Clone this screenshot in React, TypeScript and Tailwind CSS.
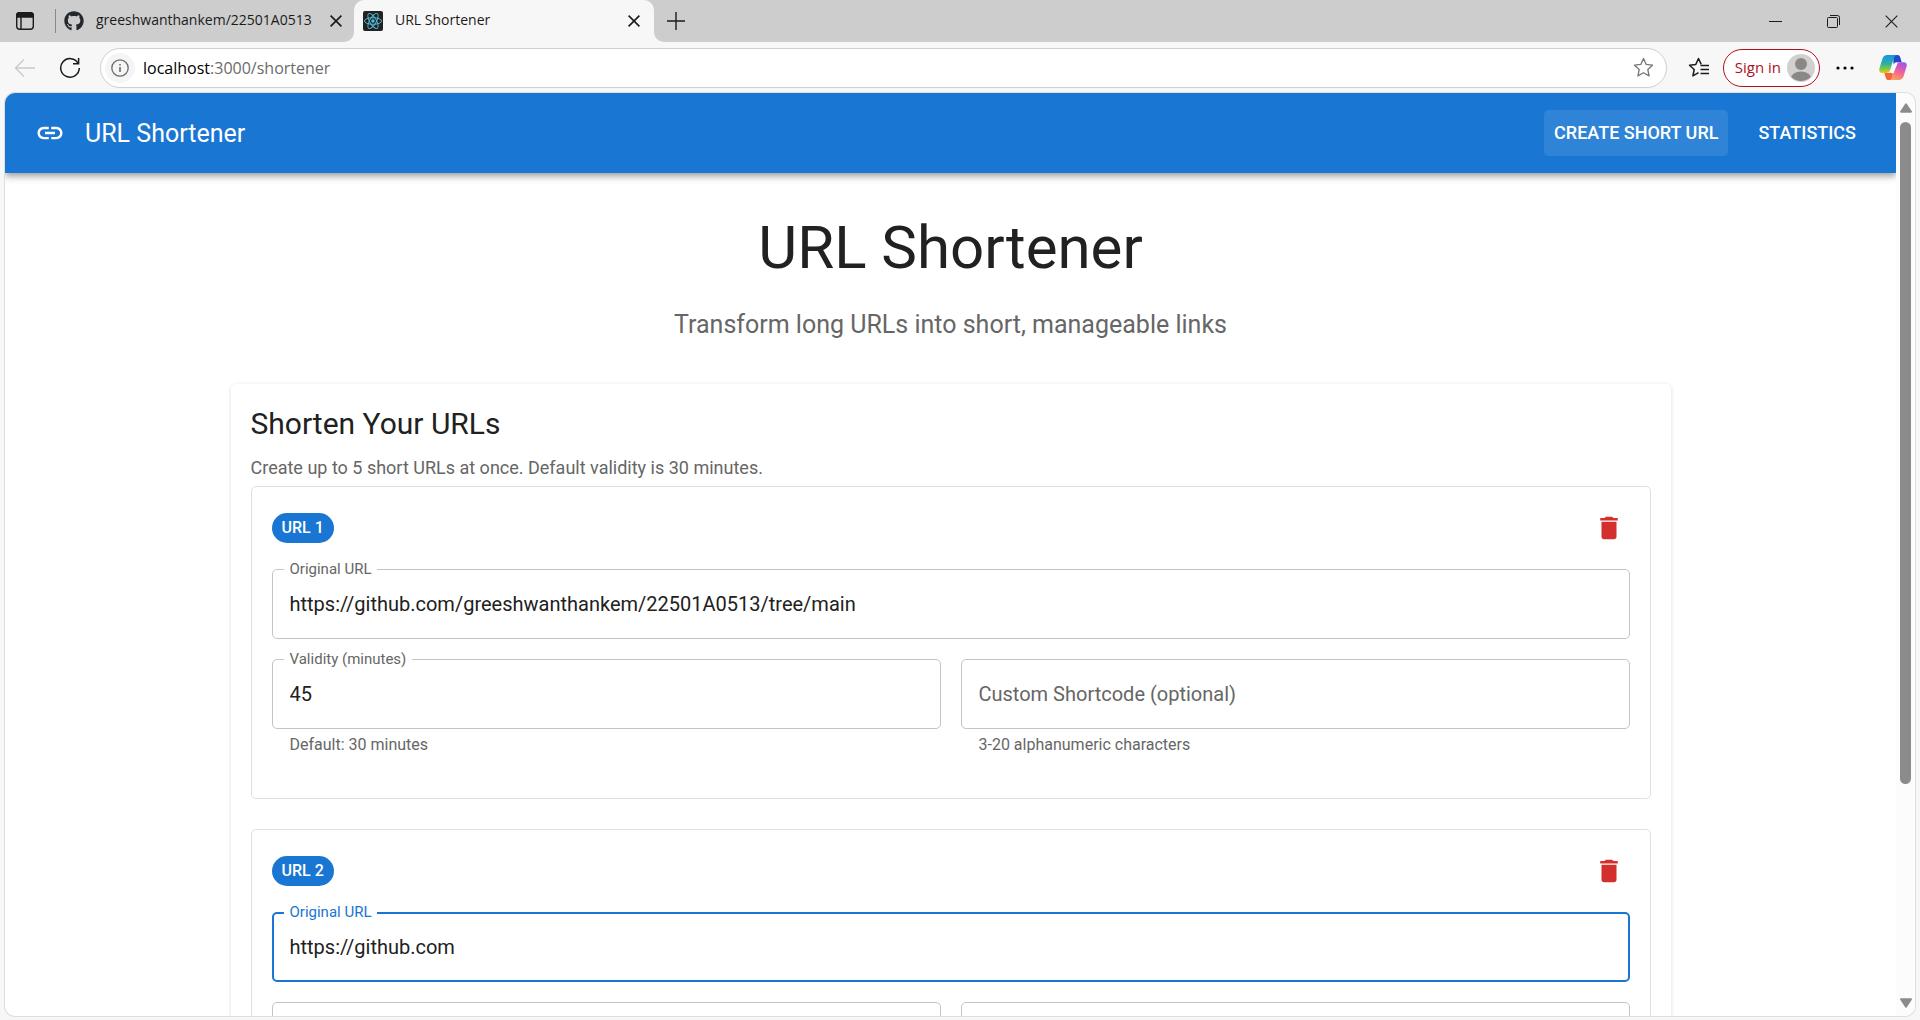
import React, { useState } from "react";
import { MdDelete, MdLink } from "react-icons/md";
import { FaGithub } from "react-icons/fa";

type UrlEntry = { original: string; validity: string; shortcode: string };

function TabActionsIcon() {
  return (
    <svg width="20" height="20" viewBox="0 0 20 20" fill="none" stroke="#1b1b1b" strokeWidth="1.4">
      <rect x="1.7" y="1.7" width="16.6" height="16.6" rx="3" />
      <path d="M2 2.8C2.5 1.6 3.6 1.7 5 1.7h10c1.400 0 2.500 0 3 1.100V6H2z" fill="#1b1b1b" />
      <path d="M6 6v12" />
    </svg>
  );
}

function ReactLogo() {
  return (
    <svg width="20" height="20" viewBox="0 0 20 20" fill="none" stroke="#53c1de" strokeWidth="0.9">
      <rect width="20" height="20" rx="2" fill="#222" stroke="none" />
      <ellipse cx="10" cy="10" rx="8.600" ry="3.300" />
      <ellipse cx="10" cy="10" rx="8.600" ry="3.300" transform="rotate(60 10 10)" />
      <ellipse cx="10" cy="10" rx="8.600" ry="3.300" transform="rotate(120 10 10)" />
      <circle cx="10" cy="10" r="1.700" fill="#53c1de" stroke="none" />
    </svg>
  );
}

function CrossIcon({ size = 12, width = 1.6 }: { size?: number; width?: number }) {
  return (
    <svg width={size} height={size} viewBox="0 0 12 12" fill="none" stroke="#1b1b1b" strokeWidth={width}>
      <path d="M.6.6l10.800 10.800M11.400.6L.6 11.400" />
    </svg>
  );
}

function BackIcon() {
  return (
    <svg width="22" height="20" viewBox="0 0 22 20" fill="none" stroke="#c9c9c9" strokeWidth="1.3">
      <path d="M21 10H1.500M10 1.500L1.500 10l8.500 8.500" />
    </svg>
  );
}

function ReloadIcon() {
  return (
    <svg width="22" height="22" viewBox="0 0 22 22" fill="none" stroke="#1b1b1b" strokeWidth="1.5">
      <path d="M19.200 6.500A9.300 9.300 0 1 0 20.300 11" />
      <path d="M19.600 1v5.800H14" />
    </svg>
  );
}

const starPath = "M10.500 1.500l2.700 5.900 6.300.8-4.700 4.300 1.300 6.400-5.600-3.200-5.600 3.200 1.300-6.400L1.500 8.200l6.300-.8z";

function StarIcon() {
  return (
    <svg width="21" height="21" viewBox="0 0 21 21" fill="none" stroke="#767676" strokeWidth="1.300" strokeLinejoin="round">
      <path d={starPath} />
    </svg>
  );
}

function FavoritesIcon() {
  return (
    <svg width="22" height="21" viewBox="0 0 22 21" fill="none" stroke="#1b1b1b" strokeWidth="1.500" strokeLinejoin="round">
      <path d="M10.500 15.700l-5.600 3.200 1.300-6.400L1.500 8.200l6.300-.8 2.700-5.900 2.700 5.900" />
      <path d="M12.500 8.500h8.500M12.500 12.500h8.500M12.500 16.500h8.500" />
    </svg>
  );
}

function CopilotIcon() {
  return (
    <svg width="28" height="27" viewBox="0 0 28 27">
      <defs>
        <linearGradient id="cpLeft" x1="0.300" y1="0" x2="0.300" y2="1">
          <stop offset="0" stopColor="#1795e6" />
          <stop offset="0.500" stopColor="#2fb0a0" />
          <stop offset="0.800" stopColor="#8fc83c" />
          <stop offset="1" stopColor="#f2c80a" />
        </linearGradient>
        <linearGradient id="cpRight" x1="0.700" y1="0" x2="0.300" y2="1">
          <stop offset="0" stopColor="#a253e8" />
          <stop offset="0.500" stopColor="#f0619a" />
          <stop offset="1" stopColor="#fba55a" />
        </linearGradient>
      </defs>
      <path d="M14 1h4.500c1.500 0 2.200.8 2.700 2.300l1.500 5H18c-2 0-2.800.8-3.400 2.500z" fill="#2249cf" />
      <path d="M14 26H9.500C8 26 7.300 25.200 6.800 23.700L5.300 19H10c2 0 2.800-.8 3.400-2.500z" fill="#f3653a" />
      <path d="M8.500 1H18c-1.800 0-2.600 1.300-3.200 3.200l-3.600 11.600C10.500 18 9.300 19 7.300 19H3.200C.8 19-.2 17.400.4 14.500L3.500 4.500C4.300 2.200 5.800 1 8.500 1z" fill="url(#cpLeft)" />
      <path d="M19.500 26H10c1.800 0 2.600-1.300 3.200-3.200l3.600-11.600C17.500 9 18.700 8.300 20.700 8.300h4.100c2.400 0 3.400 1.600 2.800 4.200l-3.100 10C23.700 24.800 22.200 26 19.500 26z" fill="url(#cpRight)" />
      <path d="M16.300 9h2.400l-4.200 10h-2.900z" fill="#fff" />
    </svg>
  );
}

function TabStrip() {
  return (
    <div className="flex h-[42px] shrink-0 bg-[#f7f7f7] text-sm text-[#1b1b1b]">
      <div className="flex w-[354px] shrink-0 items-center rounded-br-[10px] bg-[#cdcdcd] pl-[15px] pr-3">
        <button aria-label="Tab actions"><TabActionsIcon /></button>
        <span className="ml-5 h-6 w-px bg-[#8a8a8a]" />
        <FaGithub className="ml-2 size-5 text-[#24292f]" />
        <span className="ml-3 flex-1 pb-[2px] whitespace-nowrap">greeshwanthankem/22501A0513</span>
        <button aria-label="Close tab"><CrossIcon /></button>
      </div>
      <div className="flex w-[300px] shrink-0 bg-[#cdcdcd]">
        <div className="flex flex-1 items-center rounded-t-[10px] bg-[#f7f7f7] pl-[9px] pr-[14px]">
          <ReactLogo />
          <span className="ml-3 flex-1 pb-[2px]">URL Shortener</span>
          <button aria-label="Close tab"><CrossIcon /></button>
        </div>
      </div>
      <div className="flex flex-1 items-center rounded-bl-[10px] bg-[#cdcdcd] pl-[13px]">
        <button aria-label="New tab">
          <svg width="18" height="18" viewBox="0 0 18 18" stroke="#1b1b1b" strokeWidth="1.400">
            <path d="M9 0v18M0 9h18" />
          </svg>
        </button>
        <div className="ml-auto flex items-center gap-[45px] pr-[22px]">
          <button aria-label="Minimize">
            <svg width="13" height="13" viewBox="0 0 13 13" stroke="#1b1b1b"><path d="M0 6.500h13" /></svg>
          </button>
          <button aria-label="Restore">
            <svg width="13" height="13" viewBox="0 0 13 13" fill="none" stroke="#1b1b1b">
              <rect x=".5" y="2.500" width="10" height="10" rx="1" />
              <path d="M3 .5h7.500a2 2 0 0 1 2 2V10" />
            </svg>
          </button>
          <button aria-label="Close"><CrossIcon size={13} width={1} /></button>
        </div>
      </div>
    </div>
  );
}

function Toolbar() {
  return (
    <div className="flex h-[51px] shrink-0 items-center bg-[#f7f7f7] pl-[14px] pr-[13px]">
      <button aria-label="Back"><BackIcon /></button>
      <button aria-label="Reload" className="ml-[23px]"><ReloadIcon /></button>
      <div className="ml-[19px] flex h-10 flex-1 items-center rounded-full border border-[#cfcfcf] bg-white pl-1 pr-3">
        <button aria-label="Site information" className="flex size-[30px] items-center justify-center rounded-full bg-[#f5f5f5]">
          <svg width="18" height="18" viewBox="0 0 18 18" fill="none" stroke="#6b6b6b" strokeWidth="1.300">
            <circle cx="9" cy="9" r="8.200" />
            <path d="M9 8v5M9 5v1.600" strokeWidth="1.600" />
          </svg>
        </button>
        <span className="ml-2 flex-1 text-base text-[#6b6b6b]"><span className="text-black">localhost</span>:3000/shortener</span>
        <button aria-label="Add to favorites"><StarIcon /></button>
      </div>
      <button aria-label="Favorites" className="ml-[21px]"><FavoritesIcon /></button>
      <button className="ml-[13px] flex h-[38px] items-center gap-[6px] rounded-full border border-[#b01019] bg-white pl-[11px] pr-1 text-[15px] text-[#b01019]">
        Sign in
        <svg width="28" height="28" viewBox="0 0 28 28">
          <defs><clipPath id="avatar"><circle cx="14" cy="14" r="13" /></clipPath></defs>
          <circle cx="14" cy="14" r="14" fill="#d2d0ce" />
          <circle cx="14" cy="10" r="6" fill="#8a8886" />
          <ellipse cx="14" cy="25" rx="10.500" ry="7.500" fill="#8a8886" clipPath="url(#avatar)" />
        </svg>
      </button>
      <button aria-label="Settings and more" className="ml-4">
        <svg width="18" height="6" viewBox="0 0 18 6"><circle cx="2" cy="3" r="1.600" /><circle cx="9" cy="3" r="1.600" /><circle cx="16" cy="3" r="1.600" /></svg>
      </button>
      <button aria-label="Copilot" className="ml-[25px]"><CopilotIcon /></button>
    </div>
  );
}

function Field({ id, label, value, focused, helper, onChange }: {
  id: string;
  label: string;
  value: string;
  focused?: boolean;
  helper?: string;
  onChange: (value: string) => void;
}) {
  const floated = value !== "";
  return (
    <div className="flex-1">
      <div className="relative">
        <input
          id={id}
          value={value}
          onChange={(e) => onChange(e.target.value)}
          className={
            focused
              ? "block h-[70px] w-full rounded-[5px] border-2 border-[#1976d2] px-4 text-xl text-[#212121] outline-none"
              : "block h-[70px] w-full rounded-[5px] border border-[#c4c4c4] px-[17px] text-xl text-[#212121] outline-none"
          }
        />
        <label
          htmlFor={id}
          className={
            !floated
              ? "absolute top-1/2 left-[18px] -translate-y-1/2 text-xl text-[#666]"
              : focused
                ? "absolute top-0 left-3 -translate-y-1/2 bg-white px-[6px] text-[15px] leading-5 text-[#1976d2]"
                : "absolute top-0 left-3 -translate-y-1/2 bg-white px-[6px] text-[15px] leading-5 text-[#666]"
          }
        >
          {label}
        </label>
      </div>
      {helper && <p className="mx-[18px] mt-[3px] mb-px text-base leading-[25px] text-[#666]">{helper}</p>}
    </div>
  );
}

function UrlCard({ index, entry, focused, onChange }: {
  index: number;
  entry: UrlEntry;
  focused: boolean;
  onChange: (entry: UrlEntry) => void;
}) {
  return (
    <section className="mb-[30px] rounded-[5px] border border-[#e0e0e0] px-5 pt-5 pb-10">
      <div className="mb-5 flex items-center justify-between">
        <span className="flex h-[30px] items-center rounded-full bg-[#1976d2] px-[10px] text-base font-medium text-white">URL {index}</span>
        <button aria-label={`Delete URL ${index}`} className="flex size-[42px] items-center justify-center rounded-full text-[#d32f2f]">
          <MdDelete className="size-[30px]" />
        </button>
      </div>
      <Field id={`original-${index}`} label="Original URL" value={entry.original} focused={focused} onChange={(original) => onChange({ ...entry, original })} />
      <div className="mt-5 flex gap-5">
        <Field id={`validity-${index}`} label="Validity (minutes)" value={entry.validity} helper="Default: 30 minutes" onChange={(validity) => onChange({ ...entry, validity })} />
        <Field id={`shortcode-${index}`} label="Custom Shortcode (optional)" value={entry.shortcode} helper="3-20 alphanumeric characters" onChange={(shortcode) => onChange({ ...entry, shortcode })} />
      </div>
    </section>
  );
}

function Scrollbar() {
  return (
    <div className="flex w-[19px] shrink-0 flex-col items-center bg-[#fcfcfc] pt-[10px] pb-2">
      <svg width="12" height="10" viewBox="0 0 12 10" fill="#8b8b8b"><path d="M5.200.8a1 1 0 0 1 1.600 0l5 7.500c.4.700 0 1.400-.8 1.400H1c-.8 0-1.200-.7-.8-1.400z" /></svg>
      <div className="mt-[9px] mb-[10px] flex w-[11px] flex-1 flex-col">
        <div className="flex-13 rounded-full bg-[#8b8b8b]" />
        <div className="flex-4" />
      </div>
      <svg width="12" height="10" viewBox="0 0 12 10" fill="#8b8b8b"><path d="M5.200 9.200a1 1 0 0 0 1.600 0l5-7.500c.4-.7 0-1.400-.8-1.400H1c-.8 0-1.200.7-.8 1.400z" /></svg>
    </div>
  );
}

export default function App() {
  const [entries, setEntries] = useState<UrlEntry[]>([
    { original: "https://github.com/greeshwanthankem/22501A0513/tree/main", validity: "45", shortcode: "" },
    { original: "https://github.com", validity: "", shortcode: "" },
  ]);

  return (
    <div className="flex h-screen flex-col overflow-hidden bg-[#f7f7f7] font-['Open_Sans',sans-serif]">
      <TabStrip />
      <Toolbar />
      <div className="mr-[5px] mb-1 ml-[5px] flex min-h-0 flex-1 overflow-hidden rounded-[10px] bg-white font-['Roboto',sans-serif] shadow-[0_0_0_1px_#dedede]">
        <div className="min-w-0 flex-1 overflow-y-auto [scrollbar-width:none]">
          <header className="relative flex h-20 items-center bg-[#1976d2] px-[30px] text-white shadow-[0_3px_5px_-1px_rgba(0,0,0,0.2),0_5px_6px_rgba(0,0,0,0.14),0_1px_12px_rgba(0,0,0,0.12)]">
            <MdLink className="mr-5 size-[30px]" />
            <span className="flex-1 pt-[2px] text-[25px] leading-10">URL Shortener</span>
            <nav className="flex gap-5 text-lg font-medium">
              <a href="#create" className="flex h-[46px] items-center rounded-[5px] bg-white/10 px-[10px]">CREATE SHORT URL</a>
              <a href="#statistics" className="flex h-[46px] items-center rounded-[5px] px-[10px]">STATISTICS</a>
            </nav>
          </header>
          <main className="mx-auto max-w-[1500px] px-[30px] pt-10">
            <h1 className="text-center text-[60px] leading-[70px] text-[#212121]">URL Shortener</h1>
            <p className="mt-[22px] text-center text-[25px] leading-10 text-[#666]">Transform long URLs into short, manageable links</p>
            <div className="mt-[39px] rounded-[5px] bg-white p-5 shadow-[0_2px_1px_-1px_rgba(0,0,0,0.12),0_1px_4px_rgba(0,0,0,0.14)]">
              <h2 className="text-[30px] leading-10 text-[#212121]">Shorten Your URLs</h2>
              <p className="mt-[11px] mb-[6px] text-lg leading-[25px] text-[#666]">Create up to 5 short URLs at once. Default validity is 30 minutes.</p>
              {entries.map((entry, i) => (
                <UrlCard
                  key={i}
                  index={i + 1}
                  entry={entry}
                  focused={i === 1}
                  onChange={(next) => setEntries(entries.map((e, j) => (j === i ? next : e)))}
                />
              ))}
            </div>
          </main>
        </div>
        <Scrollbar />
      </div>
    </div>
  );
}
